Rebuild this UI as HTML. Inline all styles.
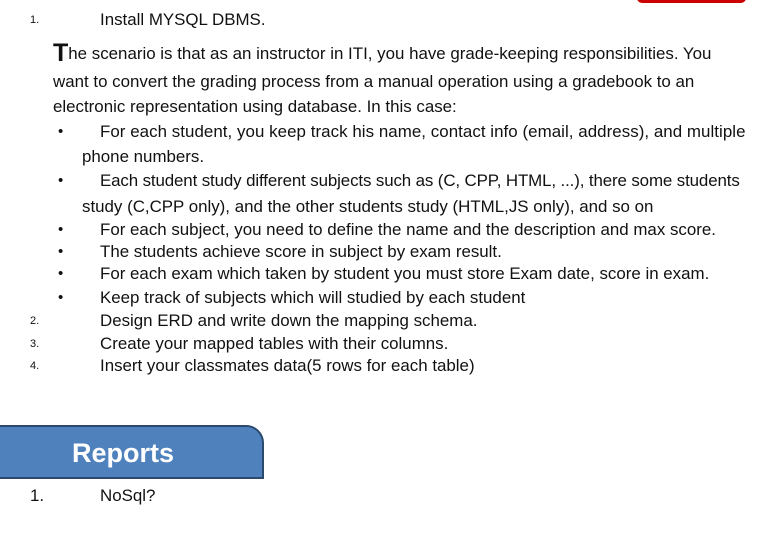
<!DOCTYPE html>
<html><head><style>
body{margin:0;width:772px;height:545px;background:#fff;position:relative;overflow:hidden;font-family:"Liberation Sans",sans-serif;color:#111}
.l{position:absolute;white-space:nowrap;font-size:16.9px;line-height:18px}
.n{position:absolute;font-size:11px;line-height:18px}
.b{position:absolute;font-size:15px;line-height:18px;left:58px}
</style></head><body>
<div style="position:absolute;left:637px;top:-4px;width:109px;height:7px;background:#c00;border-radius:0 0 5px 5px"></div>
<div class="n" style="left:30px;top:11px">1.</div><div class="l" style="left:100px;top:11px">Install MYSQL DBMS.</div>
<div class="l" style="left:53px;top:44px"><span style="font-size:25px;font-weight:bold;vertical-align:-2px">T</span>he scenario is that as an instructor in ITI, you have grade-keeping responsibilities. You</div>
<div class="l" style="left:53px;top:73px">want to convert the grading process from a manual operation using a gradebook to an</div>
<div class="l" style="left:53px;top:98px">electronic representation using database. In this case:</div>
<div class="b" style="top:123px">•</div><div class="l" style="left:100px;top:123px;letter-spacing:0.05px">For each student, you keep track his name, contact info (email, address), and multiple</div>
<div class="l" style="left:82px;top:148px">phone numbers.</div>
<div class="b" style="top:172px">•</div><div class="l" style="left:100px;top:172px;letter-spacing:-0.12px">Each student study different subjects such as (C, CPP, HTML, ...), there some students</div>
<div class="l" style="left:82px;top:198px">study (C,CPP only), and the other students study (HTML,JS only), and so on</div>
<div class="b" style="top:221px">•</div><div class="l" style="left:100px;top:221px">For each subject, you need to define the name and the description and max score.</div>
<div class="b" style="top:243px">•</div><div class="l" style="left:100px;top:243px">The students achieve score in subject by exam result.</div>
<div class="b" style="top:265px">•</div><div class="l" style="left:100px;top:265px">For each exam which taken by student you must store Exam date, score in exam.</div>
<div class="b" style="top:289px">•</div><div class="l" style="left:100px;top:289px">Keep track of subjects which will studied by each student</div>
<div class="n" style="left:30px;top:312px">2.</div><div class="l" style="left:100px;top:312px">Design ERD and write down the mapping schema.</div>
<div class="n" style="left:30px;top:335px">3.</div><div class="l" style="left:100px;top:335px">Create your mapped tables with their columns.</div>
<div class="n" style="left:30px;top:357px">4.</div><div class="l" style="left:100px;top:357px">Insert your classmates data(5 rows for each table)</div>
<div style="position:absolute;left:-4px;top:425px;width:264px;height:50px;background:#4f81bd;border:2px solid #2c4a6e;border-radius:0 18px 0 0;color:#fff;font-weight:bold;font-size:27px;line-height:52px;text-align:center;box-sizing:content-box"><span style="margin-left:-14px">Reports</span></div>
<div class="l" style="left:30px;top:487px">1.</div><div class="l" style="left:100px;top:487px">NoSql?</div>
</body></html>
